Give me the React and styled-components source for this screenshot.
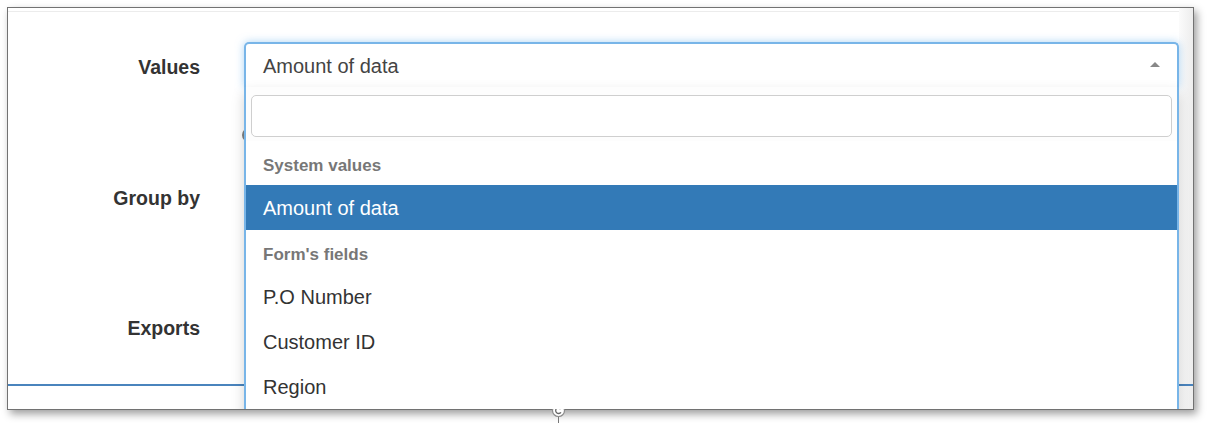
import React from "react";
import styled, { createGlobalStyle } from "styled-components";

const GlobalStyle = createGlobalStyle`
  html, body {
    margin: 0;
    padding: 0;
    background: #fff;
  }
  body {
    font-family: "Liberation Sans", Arial, Helvetica, sans-serif;
    color: #333;
  }
  * {
    box-sizing: border-box;
  }
`;

const Page = styled.div`
  width: 1209px;
  height: 423px;
  padding: 7px 0 0 7px;
  position: relative;
  overflow: hidden;
  background: #fff;
`;

const Frame = styled.div`
  width: 1187px;
  height: 403px;
  border: 1px solid #727272;
  background: #fff;
  box-shadow: 3px 4px 8px rgba(0, 0, 0, 0.38);
  display: flex;
  flex-direction: column;
  overflow: hidden;
`;

const Body = styled.div`
  display: flex;
  height: 376px;
  flex: none;
`;

const Content = styled.div`
  flex: 1;
  padding-top: 3px;
  position: relative;
  z-index: 2;
`;

const Track = styled.div`
  width: 14px;
  flex: none;
  background: linear-gradient(to right, #fbfbfb, #ededed);
`;

const Footer = styled.div`
  flex: 1;
  display: flex;
  border-top: 2px solid #4a84bd;
`;

const FooterMain = styled.div`
  flex: 1;
`;

const Form = styled.div`
  border-top: 1px solid #ececec;
  padding-top: 30px;
`;

const Row = styled.div`
  display: grid;
  grid-template-columns: 192px 1fr;
  column-gap: 44px;
  height: 45px;
  margin-bottom: 85.5px;
`;

const Label = styled.div`
  text-align: right;
  font-weight: bold;
  font-size: 19.5px;
  line-height: 45px;
  padding-top: 3px;
  color: #333;
`;

const Select = styled.div`
  position: relative;
  height: 45px;
`;

const Selection = styled.div`
  height: 45px;
  border: 2px solid #78b5e8;
  border-bottom: none;
  border-radius: 5px 5px 0 0;
  background: #fff;
  box-shadow: 0 0 8px rgba(102, 175, 233, 0.55);
  padding: 2px 17px 0;
  display: flex;
  align-items: center;
  justify-content: space-between;
  font-size: 20px;
  color: #444;
`;

const Arrow = styled.span`
  width: 0;
  height: 0;
  border-left: 5.5px solid transparent;
  border-right: 5.5px solid transparent;
  border-bottom: 5px solid #888;
  margin-top: -4px;
`;

const Radio = styled.span`
  position: absolute;
  left: -2px;
  top: 86px;
  width: 14px;
  height: 14px;
  border-radius: 50%;
  border: 2px solid #808080;
  z-index: 1;
`;

const Dropdown = styled.div`
  position: absolute;
  top: 45px;
  left: 0;
  right: 0;
  height: 400px;
  background: #fff;
  border-left: 2px solid #78b5e8;
  border-right: 2px solid #78b5e8;
  box-shadow: 0 6px 12px rgba(0, 0, 0, 0.175);
  z-index: 3;
`;

const SearchWrap = styled.div`
  padding: 8px 5px 4px 5px;
  background: #fdfdfd;
`;

const Search = styled.div`
  height: 42px;
  border: 1px solid #cfcfcf;
  border-radius: 5px;
  background: #fff;
`;

const Group = styled.div`
  height: 44px;
  line-height: 50px;
  padding: 0 17px;
  font-size: 17px;
  font-weight: bold;
  color: #777;
`;

const Option = styled.div`
  height: 45px;
  line-height: 47px;
  padding: 0 17px;
  font-size: 20px;
  color: ${(p) => (p.$active ? "#fff" : "#333")};
  background: ${(p) => (p.$active ? "#337ab7" : "transparent")};
`;

const Handle = styled.svg`
  position: absolute;
  left: 551px;
  top: 403px;
`;

const results = [
  { group: "System values", items: ["Amount of data"] },
  { group: "Form's fields", items: ["P.O Number", "Customer ID", "Region"] },
];

export default function App() {
  return (
    <Page>
      <GlobalStyle />
      <Frame>
        <Body>
          <Content>
            <Form>
              <Row>
                <Label>Values</Label>
                <Select>
                  <Selection>
                    <span>Amount of data</span>
                    <Arrow />
                  </Selection>
                  <Radio />
                  <Dropdown>
                    <SearchWrap>
                      <Search />
                    </SearchWrap>
                    {results.map((g) => (
                      <React.Fragment key={g.group}>
                        <Group>{g.group}</Group>
                        {g.items.map((item) => (
                          <Option key={item} $active={item === "Amount of data"}>
                            {item}
                          </Option>
                        ))}
                      </React.Fragment>
                    ))}
                  </Dropdown>
                </Select>
              </Row>
              <Row>
                <Label>Group by</Label>
                <div />
              </Row>
              <Row>
                <Label>Exports</Label>
                <div />
              </Row>
            </Form>
          </Content>
          <Track />
        </Body>
        <Footer>
          <FooterMain />
          <Track />
        </Footer>
      </Frame>
      <Handle width="16" height="20" viewBox="0 0 16 20">
        <line x1="7.5" y1="13" x2="7.5" y2="20" stroke="#777" strokeWidth="1" />
        <circle cx="7.5" cy="7.5" r="6" fill="#fff" stroke="#8a8a8a" strokeWidth="1.2" />
        <path
          d="M10 5.6 A3 3 0 1 0 10 9.4"
          fill="none"
          stroke="#666"
          strokeWidth="1.3"
        />
        <path d="M8.8 4.2 L10.6 5.8 L8.6 6.6 Z" fill="#666" />
      </Handle>
    </Page>
  );
}
